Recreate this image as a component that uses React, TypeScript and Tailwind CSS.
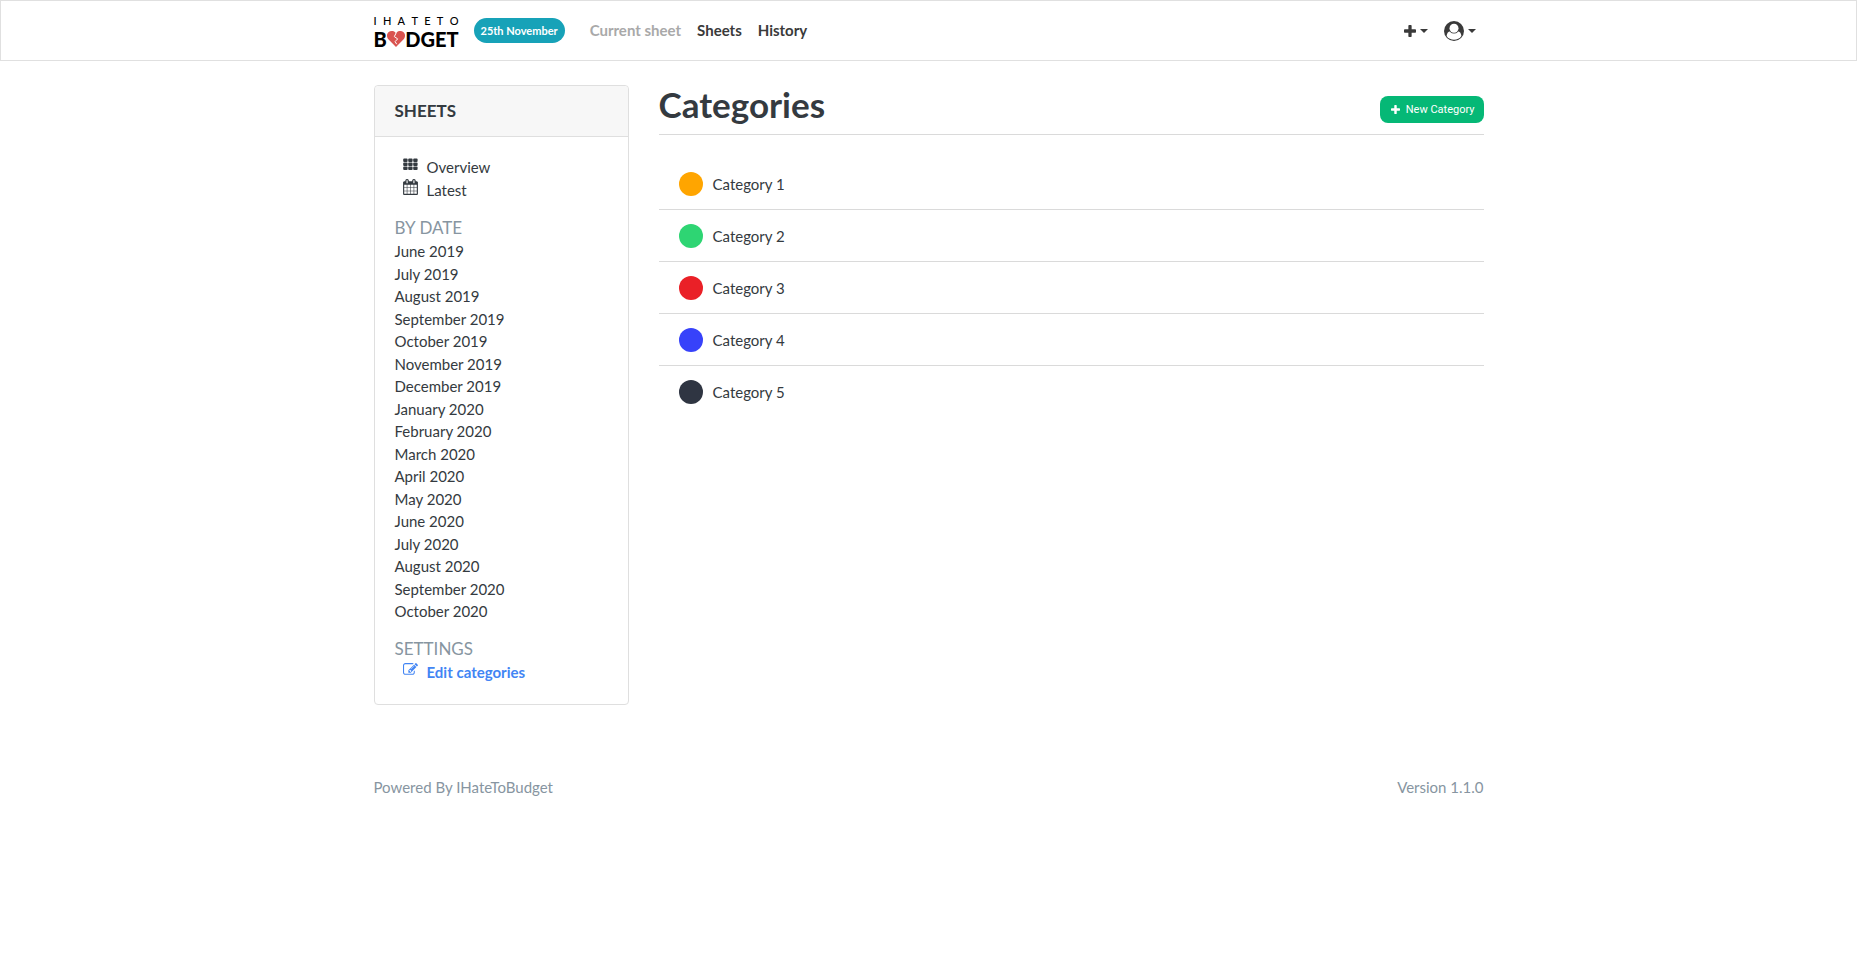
import React from "react";

type IconProps = { className?: string };

function PlusIcon({ className }: IconProps) {
  return (
    <svg viewBox="192 128 1408 1408" className={className} fill="currentColor" aria-hidden="true">
      <path d="M1600 736v192q0 40-28 68t-68 28h-416v416q0 40-28 68t-68 28h-192q-40 0-68-28t-28-68v-416h-416q-40 0-68-28t-28-68v-192q0-40 28-68t68-28h416v-416q0-40 28-68t68-28h192q40 0 68 28t28 68v416h416q40 0 68 28t28 68z" />
    </svg>
  );
}

function GridIcon({ className }: IconProps) {
  return (
    <svg viewBox="0 0 15 15" className={className} fill="currentColor" aria-hidden="true">
      {[0, 5, 10].map((x) =>
        [1, 5, 9].map((y) => <rect key={`${x}-${y}`} x={x + 0.2} y={y + 0.5} width="4.4" height="3.4" rx="0.9" />),
      )}
    </svg>
  );
}

function CalendarIcon({ className }: IconProps) {
  return (
    <svg viewBox="64 0 1664 1792" className={className} fill="currentColor" aria-hidden="true">
      <path d="M192 1664h288v-288h-288v288zm352 0h320v-288h-320v288zm-352-352h288v-320h-288v320zm352 0h320v-320h-320v320zm-352-384h288v-288h-288v288zm736 736h320v-288h-320v288zm-384-736h320v-288h-320v288zm768 736h288v-288h-288v288zm-384-352h320v-320h-320v320zm-352-864v-288q0-13-9.5-22.5t-22.5-9.5h-64q-13 0-22.5 9.5t-9.5 22.5v288q0 13 9.5 22.5t22.5 9.5h64q13 0 22.5-9.5t9.5-22.5zm736 864h288v-320h-288v320zm-384-384h320v-288h-320v288zm384 0h288v-288h-288v288zm32-480v-288q0-13-9.5-22.5t-22.5-9.5h-64q-13 0-22.5 9.5t-9.5 22.5v288q0 13 9.5 22.5t22.5 9.5h64q13 0 22.5-9.5t9.5-22.5zm384-64v1280q0 52-38 90t-90 38h-1408q-52 0-90-38t-38-90v-1280q0-52 38-90t90-38h128v-96q0-66 47-113t113-47h64q66 0 113 47t47 113v96h384v-96q0-66 47-113t113-47h64q66 0 113 47t47 113v96h128q52 0 90 38t38 90z" />
    </svg>
  );
}

function EditIcon({ className }: IconProps) {
  return (
    <svg viewBox="0 0 1792 1792" className={className} fill="currentColor" aria-hidden="true">
      <path d="M888 1184l116-116-152-152-116 116v56h96v96h56zm440-720q-16-16-33 1l-350 350q-17 17-1 33t33-1l350-350q17-17 1-33zm80 594v190q0 119-84.5 203.5t-203.5 84.5h-832q-119 0-203.5-84.5t-84.5-203.5v-832q0-119 84.5-203.5t203.5-84.5h832q63 0 117 25 15 7 18 23 3 17-9 29l-49 49q-14 14-32 8-23-6-45-6h-832q-66 0-113 47t-47 113v832q0 66 47 113t113 47h832q66 0 113-47t47-113v-126q0-13 9-22l64-64q15-15 35-7t20 29zm-96-738l288 288-672 672h-288v-288zm444 132l-92 92-288-288 92-92q28-28 68-28t68 28l152 152q28 28 28 68t-28 68z" />
    </svg>
  );
}

function UserIcon({ className }: IconProps) {
  return (
    <svg viewBox="0 0 20 20" className={className} aria-hidden="true">
      <circle cx="10" cy="10" r="10" fill="currentColor" />
      <path d="M2.600 14.900C3 12.200 4.200 10.500 6.200 10.300h7.600c2 .2 3.200 1.900 3.600 4.600A8.900 8.900 0 0 1 2.600 14.900z" fill="#fff" />
      <circle cx="10" cy="7.200" r="5.400" fill="currentColor" />
      <circle cx="10" cy="7.200" r="4.500" fill="#fff" />
    </svg>
  );
}

function Caret() {
  return (
    <svg viewBox="0 0 8 4" className="h-1 w-2" fill="currentColor" aria-hidden="true">
      <path d="M0 0h8L4 4z" />
    </svg>
  );
}

function BrokenHeart({ className }: IconProps) {
  return (
    <svg viewBox="0 0 18 16" className={className} aria-hidden="true">
      <path d="M9 16L1.600 8.500C-.5 6.300-.5 3.100 1.400 1.300 3.400-.5 6.500-.4 8.300 1.500L9 2.300l.7-.8c1.800-1.900 4.900-2 6.900-.2 1.900 1.800 1.900 5 -.2 7.200z" fill="#d9534f" />
      <path d="M9.300 1.600L7.300 5.600l3.400 2.300-2.600 2.700 1.600 2.600" fill="none" stroke="#fff" strokeWidth="1" />
    </svg>
  );
}

function Logo() {
  return (
    <a href="#" aria-label="I Hate To Budget" className="mt-1 flex w-[85px] flex-col text-black">
      <span className="flex justify-between text-[11px] leading-3 font-medium">
        {["I", "H", "A", "T", "E", "T", "O"].map((letter, i) => (
          <span key={i}>{letter}</span>
        ))}
      </span>
      <span className="flex items-center justify-between text-[20px] leading-6 font-black">
        <span>B</span>
        <BrokenHeart className="h-4 w-[18px] shrink-0" />
        <span>DGET</span>
      </span>
    </a>
  );
}

const monthsByYear = [
  {
    year: 2019,
    months: ["June", "July", "August", "September", "October", "November", "December"],
  },
  {
    year: 2020,
    months: ["January", "February", "March", "April", "May", "June", "July", "August", "September", "October"],
  },
];

const categories = [
  { name: "Category 1", color: "bg-[#ffa500]" },
  { name: "Category 2", color: "bg-[#2ed573]" },
  { name: "Category 3", color: "bg-[#ea2027]" },
  { name: "Category 4", color: "bg-[#3742fa]" },
  { name: "Category 5", color: "bg-[#2f3542]" },
];

function Navbar() {
  return (
    <nav className="border border-[#e0e0e0] bg-white">
      <div className="mx-auto flex h-[59px] max-w-[1140px] items-center px-[15px] text-[#3a3a3a]">
        <Logo />
        <span className="ml-[15px] rounded-full bg-[#17a2b8] px-[7px] text-[11px] leading-[25px] font-bold text-white">
          25th November
        </span>
        <div className="ml-[25px] flex gap-4 text-[15px] font-bold">
          <a href="#" className="text-[#a9a9a9]">Current sheet</a>
          <a href="#">Sheets</a>
          <a href="#">History</a>
        </div>
        <div className="ml-auto flex items-center gap-4 pr-2">
          <button type="button" aria-label="Add" className="flex items-center gap-1">
            <PlusIcon className="h-3 w-3" />
            <Caret />
          </button>
          <button type="button" aria-label="Account" className="flex items-center gap-1">
            <UserIcon className="h-5 w-5" />
            <Caret />
          </button>
        </div>
      </div>
    </nav>
  );
}

function Sidebar() {
  return (
    <aside className="w-[255px] shrink-0 rounded border border-[#dfdfdf] text-[15px] leading-normal">
      <h2 className="rounded-t border-b border-[#dfdfdf] bg-[#f7f7f7] px-5 py-[14px] text-[17px] leading-[22px] font-bold">
        SHEETS
      </h2>
      <div className="px-5 pt-[19px] pb-[21px]">
        <ul>
          <li>
            <a href="#" className="flex gap-[9px] pl-2">
              <GridIcon className="mt-px h-[15px] w-[15px]" />
              Overview
            </a>
          </li>
          <li>
            <a href="#" className="flex gap-[9px] pl-2">
              <CalendarIcon className="h-4 w-[15px]" />
              Latest
            </a>
          </li>
        </ul>
        <h3 className="mt-[15px] text-[17px] leading-6 text-[#8795a1]">BY DATE</h3>
        {monthsByYear.map(({ year, months }) => (
          <ul key={year}>
            {months.map((month) => (
              <li key={month}>
                <a href="#">{`${month} ${year}`}</a>
              </li>
            ))}
          </ul>
        ))}
        <h3 className="mt-[14px] text-[17px] leading-6 text-[#8795a1]">SETTINGS</h3>
        <a href="#" className="flex gap-[9px] pl-2 font-bold text-[#4285f4]">
          <EditIcon className="mt-px h-[15px] w-[15px]" />
          Edit categories
        </a>
      </div>
    </aside>
  );
}

function Categories() {
  return (
    <main className="min-w-0 flex-1">
      <header className="flex items-start justify-between border-b border-[#dadada] pb-[11px]">
        <h1 className="text-[35px] leading-[38px] font-bold">Categories</h1>
        <button
          type="button"
          className="mt-[11px] flex items-center gap-[6px] rounded-lg bg-[#05b876] pr-[9px] pl-[11px] font-[Roboto,sans-serif] text-[11px] leading-[27px] text-white"
        >
          <PlusIcon className="h-[9px] w-[9px]" />
          New Category
        </button>
      </header>
      <ul className="mt-[23px] divide-y divide-[#dadada] text-[15px] leading-6">
        {categories.map(({ name, color }) => (
          <li key={name}>
            <a href="#" className="flex items-center gap-[10px] px-5 pt-[14px] pb-[13px]">
              <span className={`h-6 w-6 rounded-full ${color}`} />
              {name}
            </a>
          </li>
        ))}
      </ul>
    </main>
  );
}

export default function App() {
  return (
    <div className="min-h-screen bg-white font-[Lato,sans-serif] text-[#343a40]">
      <Navbar />
      <div className="mx-auto max-w-[1140px] px-[15px]">
        <div className="mt-6 flex items-start gap-[30px]">
          <Sidebar />
          <Categories />
        </div>
        <footer className="mt-[71px] flex justify-between text-[15px] leading-[22px] text-[#8795a1]">
          <span>Powered By IHateToBudget</span>
          <span>Version 1.1.0</span>
        </footer>
      </div>
    </div>
  );
}
